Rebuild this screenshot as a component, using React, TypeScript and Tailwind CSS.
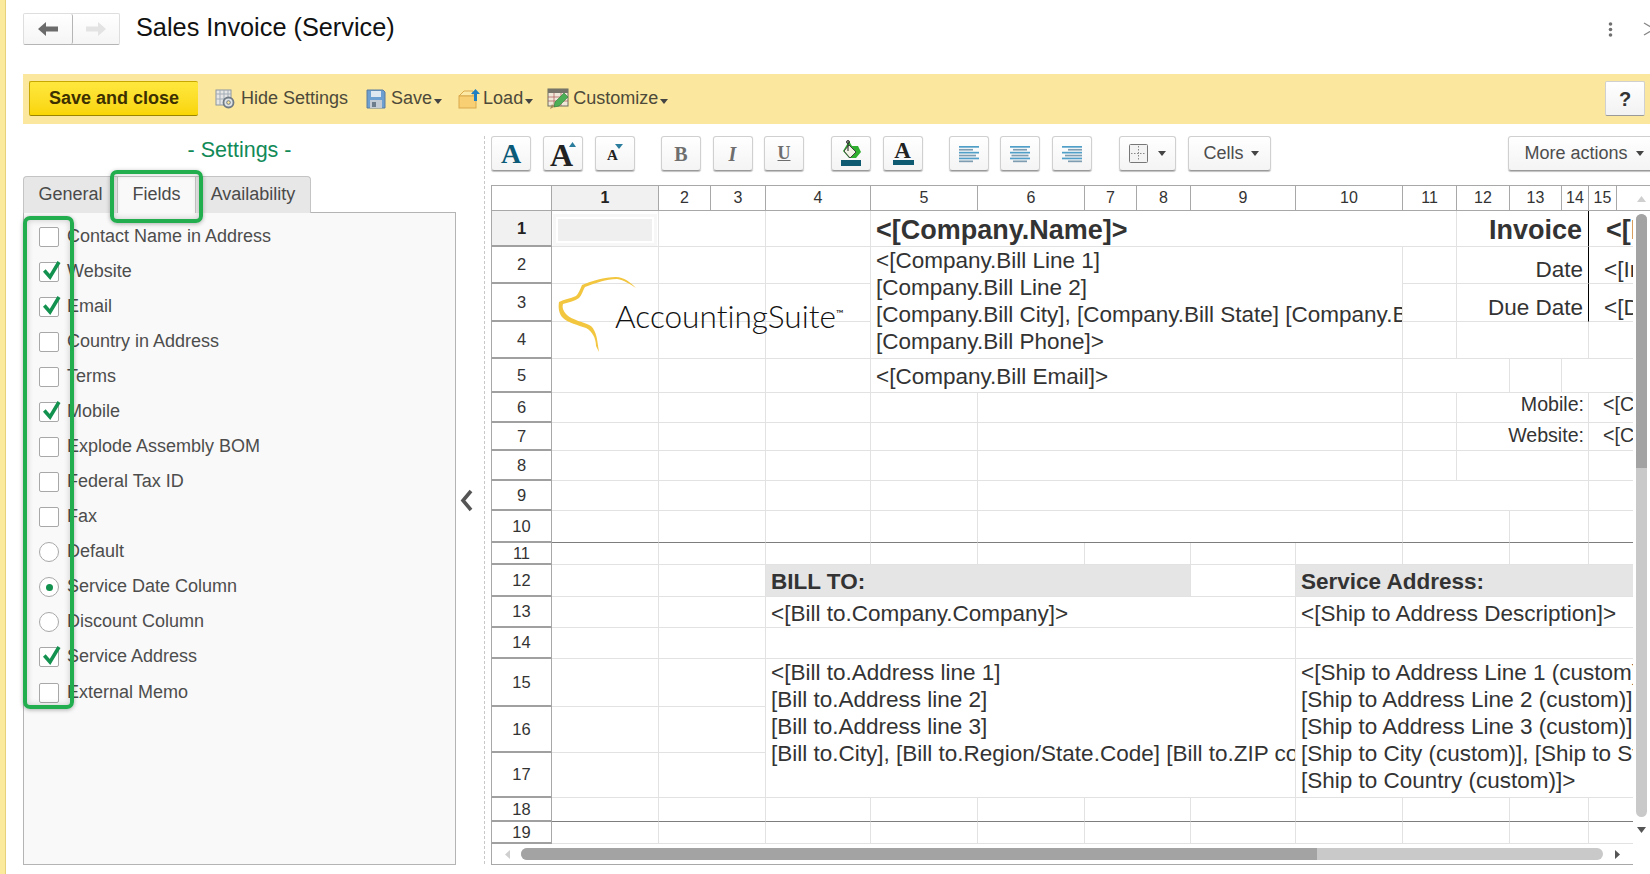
import React from "react";

const Caret = ({ c = "#444" }: { c?: string }) => (
  <svg width="8" height="5" viewBox="0 0 8 5" className="shrink-0"><path d="M0 0h8L4 5z" fill={c} /></svg>
);

const Check = () => (
  <svg width="24" height="24" viewBox="0 0 24 24" className="absolute left-[1px] top-[-4px] overflow-visible">
    <path d="M3.300 11.500l5.700 6.500L18 3" fill="none" stroke="#12914f" strokeWidth="3.500" />
  </svg>
);

const fields: [string, "c" | "C" | "r" | "R"][] = [
  ["Contact Name in Address", "c"],
  ["Website", "C"],
  ["Email", "C"],
  ["Country in Address", "c"],
  ["Terms", "c"],
  ["Mobile", "C"],
  ["Explode Assembly BOM", "c"],
  ["Federal Tax ID", "c"],
  ["Fax", "c"],
  ["Default", "r"],
  ["Service Date Column", "R"],
  ["Discount Column", "r"],
  ["Service Address", "C"],
  ["External Memo", "c"],
];

const toolBtn =
  "h-[35px] w-[40px] shrink-0 flex items-center justify-center rounded-[3px] border border-[#d0d0d0] border-b-[#9a9a9a] bg-gradient-to-b from-white to-[#f4f4f4] shadow-[0_1px_1px_rgba(0,0,0,0.25)]";

const LinesIcon = ({ mode }: { mode: "l" | "c" | "r" }) => {
  const rows = [20, 14, 20, 17, 20, 14];
  return (
    <svg width="22" height="18" viewBox="0 0 22 18">
      {rows.map((w, i) => {
        const x = mode === "l" ? 1 : mode === "c" ? 11 - w / 2 : 21 - w;
        return <rect key={i} x={x} y={1 + i * 2.9} width={w} height="1.7" fill={i % 2 ? "#7f9db0" : "#4f9fc9"} />;
      })}
    </svg>
  );
};

type Row = { r: number; s: number[]; span?: Record<number, number>; skip?: number[] };
const layout: Row[] = [
  { r: 1, s: [1, 2, 4, 5, 12, 15, 17] },
  { r: 2, s: [1, 2, 4, 5, 11, 12, 15, 17], span: { 5: 3 } },
  { r: 3, s: [1, 2, 4, 5, 11, 12, 15, 17], skip: [5] },
  { r: 4, s: [1, 2, 4, 5, 11, 12, 15, 17], skip: [5] },
  { r: 5, s: [1, 2, 4, 5, 11, 13, 14, 17] },
  { r: 6, s: [1, 2, 4, 5, 6, 11, 12, 15, 17] },
  { r: 7, s: [1, 2, 4, 5, 6, 11, 12, 15, 17] },
  { r: 8, s: [1, 2, 4, 5, 6, 11, 12, 15, 17] },
  { r: 9, s: [1, 2, 4, 5, 6, 11, 15, 17] },
  { r: 10, s: [1, 2, 4, 5, 6, 11, 13, 15, 17] },
  { r: 11, s: [1, 2, 4, 5, 6, 7, 9, 10, 11, 13, 15, 17] },
  { r: 12, s: [1, 2, 4, 9, 10, 17] },
  { r: 13, s: [1, 2, 4, 10, 17] },
  { r: 14, s: [1, 2, 4, 10, 17] },
  { r: 15, s: [1, 2, 4, 10, 17], span: { 4: 3, 10: 3 } },
  { r: 16, s: [1, 2, 4, 10, 17], skip: [4, 10] },
  { r: 17, s: [1, 2, 4, 10, 17], skip: [4, 10] },
  { r: 18, s: [1, 2, 4, 5, 6, 7, 9, 10, 11, 13, 15, 17] },
  { r: 19, s: [1, 2, 4, 5, 6, 7, 9, 10, 11, 13, 15, 17] },
];

const multi = (lines: string[]) => (
  <div className="pl-[5px] text-[22.500px] leading-[27px] text-[#333] whitespace-nowrap">
    {lines.map((l) => (
      <div key={l}>{l}</div>
    ))}
  </div>
);
const one = (t: string) => <div className="pl-[5px] pt-[4px] text-[22.500px] leading-none text-[#333] whitespace-nowrap">{t}</div>;
const right = (t: string, cls: string) => <div className={"w-full text-right whitespace-nowrap text-[#333] " + cls}>{t}</div>;

const content: Record<string, React.ReactNode> = {
  "1:5": <div className="pl-[5px] pt-[4px] text-[27px] font-bold leading-none text-[#333] whitespace-nowrap">{"<[Company.Name]>"}</div>,
  "1:12": right("Invoice", "pr-[6px] pt-[4px] text-[27px] font-bold"),
  "1:15": <div className="pl-[17px] pt-[4px] text-[27px] font-bold leading-none text-[#333] whitespace-nowrap">{"<[Invoice.Number]>"}</div>,
  "2:5": multi(["<[Company.Bill Line 1]", "[Company.Bill Line 2]", "[Company.Bill City], [Company.Bill State] [Company.Bill ZIP]", "[Company.Bill Phone]>"]),
  "2:12": right("Date", "pr-[5px] pt-[9px] text-[22.500px]"),
  "2:15": <div className="pl-[15px] pt-[9px] text-[22.500px] text-[#333] whitespace-nowrap">{"<[Invoice.Date]>"}</div>,
  "3:12": right("Due Date", "pr-[5px] pt-[11px] text-[22.500px]"),
  "3:15": <div className="pl-[15px] pt-[11px] text-[22.500px] text-[#333] whitespace-nowrap">{"<[Due Date]>"}</div>,
  "5:5": one("<[Company.Bill Email]>"),
  "6:12": right("Mobile:", "pr-[4px] pb-[6px] text-[19.600px]"),
  "6:15": <div className="pl-[14px] pb-[6px] text-[19.600px] text-[#333] whitespace-nowrap">{"<[Company.Mobile]>"}</div>,
  "7:12": right("Website:", "pr-[4px] pb-[2px] text-[19.600px]"),
  "7:15": <div className="pl-[14px] pb-[2px] text-[19.600px] text-[#333] whitespace-nowrap">{"<[Company.Website]>"}</div>,
  "12:4": <div className="pl-[5px] pt-[4px] text-[22.500px] leading-none font-bold text-[#333] whitespace-nowrap">BILL TO:</div>,
  "12:10": <div className="pl-[5px] pt-[4px] text-[22.500px] leading-none font-bold text-[#333] whitespace-nowrap">Service Address:</div>,
  "13:4": one("<[Bill to.Company.Company]>"),
  "13:10": one("<[Ship to Address Description]>"),
  "15:4": multi(["<[Bill to.Address line 1]", "[Bill to.Address line 2]", "[Bill to.Address line 3]", "[Bill to.City], [Bill to.Region/State.Code] [Bill to.ZIP code]>"]),
  "15:10": multi(["<[Ship to Address Line 1 (custom)]", "[Ship to Address Line 2 (custom)]", "[Ship to Address Line 3 (custom)]", "[Ship to City (custom)], [Ship to State (custom)]", "[Ship to Country (custom)]>"]),
};

export default function App() {
  return (
    <div className="relative flex h-[874px] w-[1650px] overflow-hidden bg-white [font-family:Liberation_Sans,Arial,sans-serif] text-[#333]">
      <div className="h-full w-[6px] shrink-0 border-r border-[#e5d27a] bg-[#fbe99c]" />
      <div className="ml-[17px] flex min-w-0 flex-1 flex-col">
        {/* Title row */}
        <div className="flex h-[74px] shrink-0 items-start">
          <div className="mt-[13px] flex h-[32px] w-[97px] rounded-[2px] border border-[#dedede] border-b-[#b5b5b5] bg-gradient-to-b from-white to-[#f5f5f5]">
            <div className="flex w-[49px] items-center justify-center rounded-[2px] border-r border-[#b5b5b5]">
              <svg width="20" height="16" viewBox="0 0 20 16"><path d="M0 8l8-7v4.500h12v5H8V15z" fill="#6b6b6b" /></svg>
            </div>
            <div className="flex flex-1 items-center justify-center">
              <svg width="20" height="16" viewBox="0 0 20 16"><path d="M20 8l-8-7v4.500H0v5h12V15z" fill="#e3e3e3" /></svg>
            </div>
          </div>
          <div className="ml-[16px] mt-[13px] text-[25.300px] leading-[29px] text-[#111]">Sales Invoice (Service)</div>
          <div className="ml-auto mr-[-5px] mt-[22px] flex items-start gap-[30px]">
            <svg width="5" height="15" viewBox="0 0 5 15"><circle cx="2.500" cy="2" r="1.800" fill="#707070" /><circle cx="2.500" cy="7.500" r="1.800" fill="#707070" /><circle cx="2.500" cy="13" r="1.800" fill="#707070" /></svg>
            <svg width="12" height="14" viewBox="0 0 12 14"><path d="M1 1l10 6L1 13" fill="none" stroke="#888" strokeWidth="1.300" /></svg>
          </div>
        </div>

        {/* Yellow command bar */}
        <div className="flex h-[50px] shrink-0 items-center bg-[#fbe79e] pb-[1px] pl-[6px] pr-[5px] text-[18px] text-[#4d4a3a]">
          <button className="h-[35px] w-[169px] rounded-[2px] border border-[#c7a800] border-b-[#9b8500] border-r-0 bg-gradient-to-b from-[#ffe83c] to-[#f9d500] text-[18px] font-bold text-[#3c3000]">
            Save and close
          </button>
          <svg width="21" height="22" viewBox="0 0 21 22" className="ml-[17px]">
            <rect x="1" y="2" width="15" height="15" fill="#e6e6e6" stroke="#8c96a0" />
            <path d="M1 6h15M5 2v15M9 2v15M13 2v15M1 11h15" stroke="#a3adb6" />
            <circle cx="13.500" cy="14.500" r="5" fill="#dfe3e6" stroke="#6f7a85" strokeWidth="1.800" />
            <circle cx="13.500" cy="14.500" r="1.800" fill="#fbe79e" stroke="#6f7a85" />
          </svg>
          <span className="ml-[5px]">Hide Settings</span>
          <svg width="20" height="20" viewBox="0 0 20 20" className="ml-[18px]">
            <path d="M1 1h16l2 2v16H1z" fill="#6d9fd1" stroke="#5d7d9c" />
            <rect x="5" y="2" width="10" height="6" fill="#dfe8f0" />
            <rect x="4" y="11" width="12" height="8" fill="#c3ccd4" />
            <rect x="6" y="13" width="4" height="5" fill="#6d7d8c" />
          </svg>
          <span className="ml-[5px]">Save</span>
          <span className="ml-[2px] mt-[5px]"><Caret /></span>
          <svg width="23" height="21" viewBox="0 0 23 21" className="ml-[16px]">
            <path d="M1 8l5-5h9v5z" fill="#fde9a6" stroke="#d9a94c" />
            <rect x="1" y="8" width="17" height="12" fill="#f8cf72" stroke="#d9a94c" />
            <path d="M17.500 1l4.500 5h-3v7h-3V6h-3z" fill="#1f7fc0" />
          </svg>
          <span className="ml-[2px]">Load</span>
          <span className="ml-[2px] mt-[5px]"><Caret /></span>
          <svg width="23" height="22" viewBox="0 0 23 22" className="ml-[14px]">
            <rect x="1" y="1" width="20" height="17" fill="#efe8d8" stroke="#6e6e60" />
            <rect x="1" y="1" width="20" height="4" fill="#77756a" />
            <path d="M1 9h20M1 13h20M7 5v13M14 5v13" stroke="#a55" strokeWidth="0.700" />
            <path d="M7 19l1-5L17 5l4 4-9 9z" fill="#4cae55" stroke="#2f7a3b" strokeWidth="0.600" />
            <path d="M3 21l4-2-2-3z" fill="#a08a5a" />
          </svg>
          <span className="ml-[3px]">Customize</span>
          <span className="ml-[2px] mt-[5px]"><Caret /></span>
          <button className="ml-auto h-[35px] w-[40px] rounded-[2px] border border-[#d0d0d0] border-b-[#9a9a9a] bg-gradient-to-b from-white to-[#f2f2f2] text-[20px] font-bold text-[#333]">?</button>
        </div>

        {/* Body */}
        <div className="flex min-h-0 flex-1">
          {/* Settings */}
          <div className="flex w-[433px] shrink-0 flex-col">
            <div className="flex h-[52px] shrink-0 items-center justify-center pt-[1px] text-[21.500px] text-[#118a58]">- Settings -</div>
            <div className="relative z-10 mb-[-1px] flex h-[37px] w-[288px] rounded-t-[4px] border-x border-t border-[#c4c4c4] bg-[#e7e7e7] text-[18px] text-[#4a4a4a]">
              <div className="flex w-[93px] items-center justify-center pb-[2px]">General</div>
              <div className="flex w-[79px] items-center justify-center border-x border-[#c4c4c4] bg-[#f9f9f9] pb-[2px]">Fields</div>
              <div className="flex flex-1 items-center justify-center pb-[2px]">Availability</div>
            </div>
            <div className="h-[653px] border border-[#b4b4b4] bg-[#f9f9f9] pl-[15px] pt-[6px]">
              {fields.map(([label, kind]) => (
                <div key={label} className="flex h-[35.080px] items-center gap-[8px] text-[18px] leading-none text-[#4d4d4d]">
                  {kind === "c" || kind === "C" ? (
                    <div className="relative h-[20px] w-[20px] shrink-0 rounded-[2px] border border-[#a8a8a8] bg-white">{kind === "C" && <Check />}</div>
                  ) : (
                    <div className="flex h-[20px] w-[20px] shrink-0 items-center justify-center rounded-full border border-[#a8a8a8] bg-white">
                      {kind === "R" && <div className="h-[7px] w-[7px] rounded-full bg-[#12914f]" />}
                    </div>
                  )}
                  <span className="pb-[2px]">{label}</span>
                </div>
              ))}
            </div>
          </div>

          {/* Collapse gutter */}
          <div className="flex w-[28px] shrink-0 items-center justify-center pb-[1px] pt-[16px]">
            <svg width="13" height="23" viewBox="0 0 13 23" className="mb-[12px] mr-[7px]"><path d="M11 2L3 11.500l8 9.500" fill="none" stroke="#555" strokeWidth="3.600" /></svg>
          </div>
          <div className="mb-[10px] mt-[12px] w-0 shrink-0 border-l border-dashed border-[#c8c8c8]" />

          {/* Editor */}
          <div className="ml-[6px] flex min-w-0 flex-1 flex-col overflow-hidden pt-[12px]">
            <div className="flex h-[35px] shrink-0 items-center">
              <div className="flex gap-[12px]">
                <div className={toolBtn}><span className="[font-family:Liberation_Serif,serif] text-[28px] font-bold leading-none text-[#0b5a78]">A</span></div>
                <div className={toolBtn + " gap-0"}>
                  <span className="mt-[3px] [font-family:Liberation_Serif,serif] text-[32px] font-bold leading-none text-[#222]">A</span>
                  <svg width="7" height="5" viewBox="0 0 7 5" className="mb-[19px] ml-[-4px]"><path d="M3.500 0L7 5H0z" fill="#2a7d9c" /></svg>
                </div>
                <div className={toolBtn}>
                  <span className="mt-[3px] [font-family:Liberation_Serif,serif] text-[15px] font-bold leading-none text-[#222]">A</span>
                  <svg width="8" height="5" viewBox="0 0 8 5" className="mb-[15px] ml-[-3px]"><path d="M0 0h8L4 5z" fill="#2a7d9c" /></svg>
                </div>
              </div>
              <div className="ml-[26px] flex gap-[11.500px]">
                <div className={toolBtn}><span className="[font-family:Liberation_Serif,serif] text-[20px] font-bold text-[#6e6e6e]">B</span></div>
                <div className={toolBtn}><span className="[font-family:Liberation_Serif,serif] text-[20px] font-bold italic text-[#6e6e6e]">I</span></div>
                <div className={toolBtn}><span className="[font-family:Liberation_Serif,serif] text-[18px] font-bold text-[#6e6e6e] underline">U</span></div>
              </div>
              <div className="ml-[27px] flex gap-[11.500px]">
                <div className={toolBtn}>
                  <svg width="24" height="27" viewBox="0 0 24 27">
                    <path d="M10 1l3 5 6 0 3 6-5 6-7 0-6-7z" fill="#2fae2f" />
                    <path d="M5 11l5-6 7 7-6 6z" fill="#f2f2e6" stroke="#333" strokeWidth="0.900" />
                    <path d="M9 1v10" stroke="#333" strokeWidth="1.100" />
                    <circle cx="9" cy="2" r="1.500" fill="none" stroke="#333" />
                    <rect x="2" y="20" width="20" height="6" fill="#0e5a70" />
                  </svg>
                </div>
                <div className={toolBtn + " relative"}>
                  <span className="mb-[7px] [font-family:Liberation_Serif,serif] text-[23px] font-bold leading-none text-[#222]">A</span>
                  <div className="absolute bottom-[5px] left-[9px] h-[5px] w-[21px] bg-[#0e5a70]" />
                </div>
              </div>
              <div className="ml-[26px] flex gap-[11.500px]">
                <div className={toolBtn}><LinesIcon mode="l" /></div>
                <div className={toolBtn}><LinesIcon mode="c" /></div>
                <div className={toolBtn}><LinesIcon mode="r" /></div>
              </div>
              <div className={toolBtn + " ml-[27px] !w-[57px] gap-[10px]"}>
                <svg width="19" height="19" viewBox="0 0 19 19">
                  <rect x="0.500" y="0.500" width="18" height="18" rx="1" fill="#f3f3f3" stroke="#777" />
                  <path d="M9.500 2v15M2 9.500h15" stroke="#888" strokeDasharray="1.500 1.500" />
                </svg>
                <Caret />
              </div>
              <div className={toolBtn + " ml-[12px] !w-[83px] gap-[7px] pl-[4px] text-[18px] text-[#4d4d4d]"}>
                <span>Cells</span>
                <Caret />
              </div>
              <div className={toolBtn + " ml-[237px] !w-[160px] !justify-start gap-[8px] pl-[16px] text-[18px] text-[#4d4d4d]"}>
                <span>More actions</span>
                <Caret />
              </div>
            </div>

            {/* Sheet */}
            <div className="mt-[14px] grid h-[680px] w-[1159px] grid-cols-[61px_107px_52px_55px_105px_107px_107px_52px_54px_105px_107px_54px_53px_52px_27px_28px_16px_18px] grid-rows-[26px_36px_37px_38px_37px_34px_30px_28px_30px_30px_32px_22px_32px_31px_31px_48px_46px_45px_24px_22px_21px]">
              <div className="col-start-1 row-start-1 border-y border-l border-r border-[#a8a8a8]" />
              {Array.from({ length: 15 }, (_, i) => i + 1).map((n) => (
                <div
                  key={n}
                  className={
                    "row-start-1 flex items-center justify-center border-y border-r border-y-[#a8a8a8] border-r-[#a8a8a8] text-[16px] " +
                    (n === 1 ? "bg-[#f1f1f1] font-bold text-[#222]" : "text-[#333]")
                  }
                  style={{ gridColumn: `${n + 1}/${n + 2}` }}
                >
                  {n}
                </div>
              ))}
              <div className="col-start-17 col-end-19 row-start-1 border-y border-[#a8a8a8]" />

              {layout.map(({ r }) => (
                <div
                  key={r}
                  className={
                    "col-start-1 flex items-center justify-center border-b-2 border-l border-r border-b-[#a0a0a0] border-l-[#a8a8a8] border-r-[#a8a8a8] text-[16.500px] " +
                    (r === 1 ? "bg-[#f1f1f1] font-bold text-[#222]" : "text-[#333]")
                  }
                  style={{ gridRow: `${r + 1}/${r + 2}` }}
                >
                  {r}
                </div>
              ))}

              {layout.flatMap(({ r, s, span, skip }) =>
                s.slice(0, -1).map((c, i) => {
                  if (skip && skip.includes(c)) return null;
                  const rs = span?.[c] ?? 1;
                  const gray = r === 12 && (c === 4 || c === 10);
                  const dark = r === 10 || r === 18;
                  const black = r <= 3 && c === 12;
                  const last = s[i + 1] === 17;
                  const node = content[`${r}:${c}`];
                  const top = rs > 1;
                  return (
                    <div
                      key={`${r}:${c}`}
                      className={
                        "flex min-w-0 overflow-hidden " +
                        (top ? "items-start " : "items-center ") +
                        (dark ? "border-b border-b-[#7d7d7d] " : "border-b border-b-[#e2e2e2] ") +
                        (last ? "" : black ? "border-r border-r-black " : "border-r border-r-[#e2e2e2] ") +
                        (gray ? "bg-[#e5e5e5] " : "")
                      }
                      style={{ gridRow: `${r + 1}/${r + 1 + rs}`, gridColumn: `${c + 1}/${s[i + 1] + 1}` }}
                    >
                      {r === 1 && c === 1 ? (
                        <div className="mx-[1px] mt-[2px] h-[32px] w-full border-[3px] border-[#f7f7f7] bg-[#efefef] outline-2 outline-offset-[-5px] outline-white" />
                      ) : (
                        node
                      )}
                    </div>
                  );
                })
              )}

              {/* Floating logo picture over cells */}
              <div className="pointer-events-none relative col-start-2 col-end-6 row-start-3 row-end-6">
                <svg width="84" height="78" viewBox="0 0 84 78" className="absolute left-[6px] top-[29px]">
                  <path
                    d="M78 12C72 6 66 1 58 1C46 1 34 5 24 9C22 14 20 18 18 20C12 23 6 23 1 26C0 32 1 38 5 42C10 47 20 49 28 52C34 55 38 62 38 70L41 76C39 64 39 56 33 50C26 46 14 44 9 39C5 35 4 31 5 28C11 26 17 25 21 22C24 19 25 14 27 11C38 7 48 3 59 3C66 4 72 8 78 12Z"
                    fill="#f3c63f"
                  />
                </svg>
                <div className="absolute left-[63px] top-[50px] whitespace-nowrap [font-family:Lato,sans-serif] [font-variant-ligatures:none] text-[31.600px] font-light leading-[38px] text-[#111]">
                  AccountingSuite<span className="relative top-[-11px] text-[10px] font-normal">™</span>
                </div>
              </div>

              {/* Vertical scrollbar */}
              <div className="z-10 col-start-18 row-start-1 row-end-21 flex flex-col items-center pl-[1px] pr-[3px]">
                <svg width="9" height="6" viewBox="0 0 9 6" className="mt-[11px] shrink-0"><path d="M4.500 0L9 6H0z" fill="#cfcfcf" /></svg>
                <div className="mt-[12px] flex h-[603px] w-[11px] shrink-0 flex-col overflow-hidden rounded-full bg-[#c9c9c9]">
                  <div className="h-[254px] bg-[#a3a3a3]" />
                </div>
                <svg width="9" height="6" viewBox="0 0 9 6" className="mt-[10px] shrink-0"><path d="M0 0h9L4.500 6z" fill="#555" /></svg>
              </div>

              {/* Horizontal scrollbar */}
              <div className="col-start-1 col-end-18 row-start-21 flex items-center border-b border-l border-[#a8a8a8] pl-[13px]">
                <svg width="5" height="9" viewBox="0 0 5 9" className="shrink-0"><path d="M5 0v9L0 4.500z" fill="#cfcfcf" /></svg>
                <div className="ml-[11px] flex h-[12px] w-[1082px] shrink-0 overflow-hidden rounded-full bg-[#c9c9c9]">
                  <div className="h-full w-[796px] bg-[#a3a3a3]" />
                </div>
                <svg width="5" height="9" viewBox="0 0 5 9" className="ml-[12px] shrink-0"><path d="M0 0v9l5-4.500z" fill="#555" /></svg>
              </div>
            </div>
          </div>
        </div>
      </div>

      {/* Green annotation outlines */}
      <div className="pointer-events-none absolute left-[110px] top-[170px] z-20 h-[53px] w-[93px] rounded-[7px] border-[4px] border-[#22ad4f] shadow-[0_1px_4px_rgba(0,0,0,0.3),inset_0_0_6px_rgba(0,0,0,0.2)]" />
      <div className="pointer-events-none absolute left-[23px] top-[216px] z-20 h-[493px] w-[51px] rounded-[7px] border-[4px] border-[#22ad4f] shadow-[0_1px_4px_rgba(0,0,0,0.3),inset_0_0_6px_rgba(0,0,0,0.2)]" />
    </div>
  );
}
